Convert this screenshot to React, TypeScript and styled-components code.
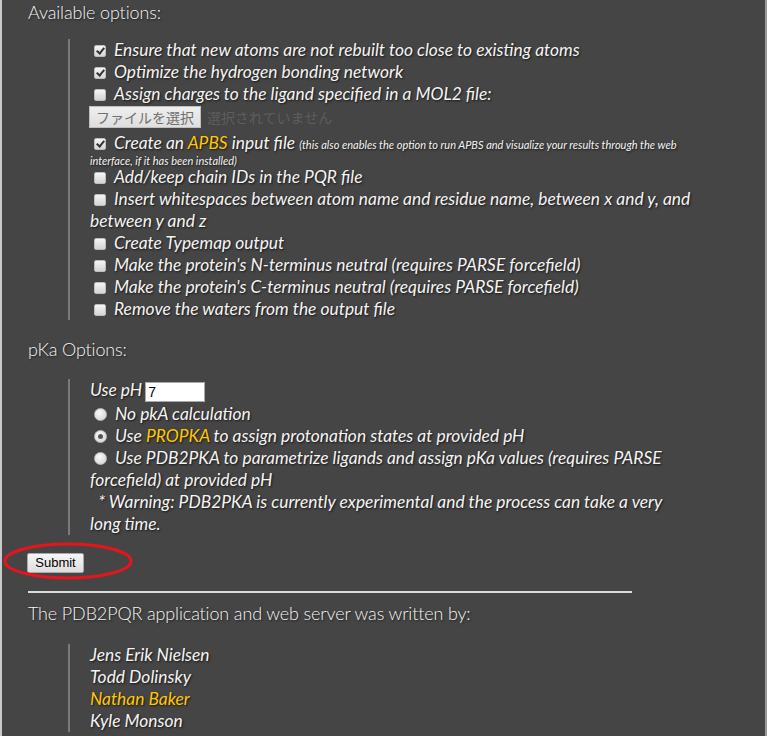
import React from "react";
import styled, { createGlobalStyle } from "styled-components";

const Global = createGlobalStyle`
  html, body { margin: 0; padding: 0; background: #454545; }
  body { font-family: Lato, "Noto Sans", sans-serif; color: #eeeeee; }
`;

const Page = styled.div`
  box-sizing: border-box;
  width: 767px;
  height: 736px;
  overflow: hidden;
  background: #454545;
  border-left: 2px solid #c9c9c9;
  border-right: 2px solid #9a9a9a;
  padding: 0 26px;
  position: relative;
`;

const Heading = styled.p<{ $top?: number }>`
  margin: ${(p) => p.$top ?? 0}px 0 0 0;
  font-weight: 300;
  font-size: 18px;
  line-height: 24px;
  letter-spacing: -0.15px;
  color: #f4f4f4;
  text-shadow: 1px 1px 2px #1e1e1e;
`;

const Quote = styled.blockquote<{ $top: number }>`
  margin: ${(p) => p.$top}px 44px 0 40px;
  border-left: 2px solid #7a7a7a;
  padding-left: 20px;
  font-style: italic;
  font-size: 17.4px;
  line-height: 22px;
  color: #f4f4f4;
  text-shadow: 1px 1px 2px #161616;
`;

const Row = styled.div`
  line-height: 22px;
`;

const PhRow = styled.div`
  line-height: 22px;
  height: 24px;
`;

const Check = styled.span<{ $on?: boolean }>`
  display: inline-block;
  box-sizing: border-box;
  width: 12px;
  height: 12px;
  margin: 0 8px 0 4px;
  vertical-align: -1px;
  border-radius: 2px;
  border: 1px solid #bdbdbd;
  background: linear-gradient(#f6f6f6, #d4d4d4);
  position: relative;
  &::after {
    content: "";
    display: ${(p) => (p.$on ? "block" : "none")};
    position: absolute;
    left: 3px;
    top: 0px;
    width: 3px;
    height: 6px;
    border: solid #333;
    border-width: 0 2px 2px 0;
    transform: rotate(40deg);
  }
`;

const Radio = styled.span<{ $on?: boolean }>`
  display: inline-block;
  box-sizing: border-box;
  width: 13px;
  height: 13px;
  margin: 0 8px 0 4px;
  vertical-align: -1px;
  border-radius: 50%;
  border: 1px solid #bdbdbd;
  background: radial-gradient(circle at 40% 35%, #fafafa, #cfcfcf);
  position: relative;
  &::after {
    content: "";
    display: ${(p) => (p.$on ? "block" : "none")};
    position: absolute;
    left: 3px;
    top: 3px;
    width: 5px;
    height: 5px;
    border-radius: 50%;
    background: #555;
  }
`;

const FileRow = styled.div`
  display: flex;
  align-items: flex-start;
  height: 27px;
  padding-top: 1px;
  box-sizing: border-box;
  margin-left: -1px;
  font-style: normal;
  font-family: "Noto Sans CJK JP", sans-serif;
  text-shadow: none;
`;

const FileButton = styled.span`
  box-sizing: border-box;
  height: 22px;
  padding: 0 6px;
  display: flex;
  align-items: center;
  font-size: 14px;
  color: #6f6f6f;
  background: linear-gradient(#efefef, #dedede);
  border: 1px solid #bfbfbf;
`;

const FileNote = styled.span`
  font-size: 14px;
  line-height: 22px;
  color: #5d5d5d;
  margin-left: 6px;
`;

const Gold = styled.span`
  color: #ffc800;
`;

const WrapRow = styled.div`
  line-height: 10px;
`;

const Big = styled.span`
  line-height: 22px;
`;

const Small = styled.small`
  font-size: 11px;
  line-height: 10px;
`;

const PhInput = styled.span`
  display: inline-block;
  box-sizing: border-box;
  width: 60px;
  height: 20px;
  margin-left: 3px;
  vertical-align: -1px;
  background: #fff;
  border: 1px solid #a9a9a9;
  color: #000;
  font-style: normal;
  font-family: "Liberation Sans", Arial, sans-serif;
  font-size: 14px;
  line-height: 18px;
  padding-left: 2px;
  text-shadow: none;
`;

const SubmitWrap = styled.div`
  position: relative;
  margin-top: 16px;
  height: 20px;
  margin-left: -1px;
`;

const SubmitButton = styled.button`
  box-sizing: border-box;
  height: 20px;
  width: 57px;
  padding: 0;
  font-family: "Liberation Sans", Arial, sans-serif;
  font-size: 13px;
  color: #000;
  background: linear-gradient(#f6f6f6, #dddddd);
  border: 1px solid #a8a8a8;
  border-radius: 2px;
`;

const Ellipse = styled.svg`
  position: absolute;
  left: -26px;
  top: -10px;
  width: 134px;
  height: 40px;
  pointer-events: none;
`;

const Rule = styled.hr`
  width: 85%;
  margin: 20px 0 0 0;
  border: none;
  border-top: 2px solid #dcdcdc;
  height: 0;
`;

export default function App() {
  return (
    <>
      <Global />
      <Page>
        <Heading>Available options:</Heading>
        <Quote $top={15}>
          <Row><Check $on />Ensure that new atoms are not rebuilt too close to existing atoms</Row>
          <Row><Check $on />Optimize the hydrogen bonding network</Row>
          <Row><Check />Assign charges to the ligand specified in a MOL2 file:</Row>
          <FileRow>
            <FileButton>ファイルを選択</FileButton>
            <FileNote>選択されていません</FileNote>
          </FileRow>
          <WrapRow>
            <Big><Check $on />Create an <Gold>APBS</Gold> input file </Big>
            <Small>(this also enables the option to run APBS and visualize your results through the web</Small>
            <br />
            <Small>interface, if it has been installed)</Small>
          </WrapRow>
          <Row><Check />Add/keep chain IDs in the PQR file</Row>
          <Row><Check />Insert whitespaces between atom name and residue name, between x and y, and between y and z</Row>
          <Row><Check />Create Typemap output</Row>
          <Row><Check />Make the protein's N-terminus neutral (requires PARSE forcefield)</Row>
          <Row><Check />Make the protein's C-terminus neutral (requires PARSE forcefield)</Row>
          <Row><Check />Remove the waters from the output file</Row>
        </Quote>
        <Heading $top={17}>pKa Options:</Heading>
        <Quote $top={18}>
          <PhRow>Use pH<PhInput>7</PhInput></PhRow>
          <Row><Radio />No pkA calculation</Row>
          <Row><Radio $on />Use <Gold>PROPKA</Gold> to assign protonation states at provided pH</Row>
          <Row><Radio />Use PDB2PKA to parametrize ligands and assign pKa values (requires PARSE forcefield) at provided pH</Row>
          <Row>{"\u00a0 * Warning: PDB2PKA is currently experimental and the process can take a very long time."}</Row>
        </Quote>
        <SubmitWrap>
          <SubmitButton>Submit</SubmitButton>
          <Ellipse viewBox="0 0 134 40">
            <ellipse cx="67" cy="20" rx="63" ry="17" fill="none" stroke="#e8141c" strokeWidth="3" />
          </Ellipse>
        </SubmitWrap>
        <Rule />
        <Heading $top={8}>The PDB2PQR application and web server was written by:</Heading>
        <Quote $top={19}>
          <Row>Jens Erik Nielsen</Row>
          <Row>Todd Dolinsky</Row>
          <Row><Gold>Nathan Baker</Gold></Row>
          <Row>Kyle Monson</Row>
        </Quote>
      </Page>
    </>
  );
}
